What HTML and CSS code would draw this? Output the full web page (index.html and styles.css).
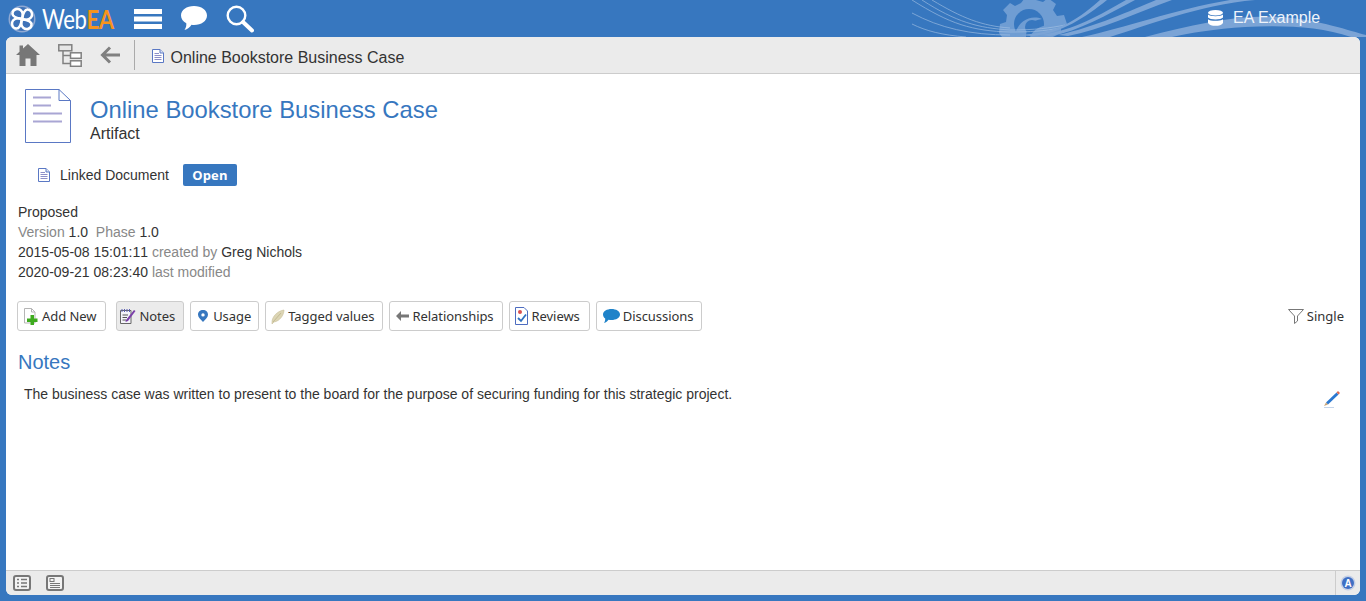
FILE: index.html
```html
<!DOCTYPE html>
<html lang="en">
<head>
<meta charset="utf-8">
<title>Online Bookstore Business Case</title>
<link rel="stylesheet" href="styles.css">
</head>
<body>
<svg width="0" height="0" class="defs">
  <defs>
    <symbol id="doc" viewBox="0 0 12 14">
      <path d="M.5.500H8L11.500 4V13.500H.5Z" fill="#fff" stroke="#5a78c4"/>
      <path d="M8 .500V4H11.500" fill="#dfe4f5" stroke="#5a78c4"/>
      <path d="M2.500 4.500H7M2.500 6.500H9.500M2.500 8.500H9.500M2.500 10.500H9.500" stroke="#8d8fc8"/>
    </symbol>
  </defs>
</svg>
<header class="topbar">
  <svg class="waves" viewBox="0 0 456 37" width="456" height="37" aria-hidden="true">
    <path d="M118 -6l6 0 2 6 7 2 5-4 8 6-3 6 4 6 7-1 3 9-6 3 0 6-8 4H92l-3-4 1-9 6-2 1-7-4-5 7-7 5 3 6-3Z" fill="#6f9dd3"/>
    <circle cx="119" cy="24" r="15" fill="#3777bf"/>
    <path d="M105 37C106 22 120 14 132 19 122 20 116 27 116 37Z" fill="#6f9dd3"/>
    <circle cx="122" cy="27" r="7" fill="#3777bf"/>
    <path d="M120 37C124 28 134 24 142 26L132 37Z" fill="#6f9dd3"/>
    <g fill="none" stroke="#a9c5e6" stroke-width=".8" opacity=".75">
      <path d="M2 0C40 24 62 31 100 32 120 32 135 31 150 28"/>
      <path d="M12 0C46 22 68 28 100 30 125 30 140 28 155 25"/>
      <path d="M22 0C52 18 72 26 100 28"/>
      <path d="M2 13C30 28 60 35 100 35"/>
      <path d="M2 24C16 31 32 35 56 37"/>
    </g>
    <g fill="#7ba4d6">
      <path d="M108 35C150 34 172 16 190 0H197C176 17 150 34 122 36Z"/>
      <path d="M130 35C165 30 190 15 216 0H225C196 15 170 31 140 36Z"/>
      <path d="M148 35C185 27 222 10 246 0H262C226 13 190 30 158 36Z"/>
      <path d="M172 37C215 28 262 10 320 0H345C290 5 235 26 200 37Z"/>
      <path d="M235 37C285 24 330 14 372 17 410 20 440 31 456 35V37H441C410 26 370 25 335 27 305 29 280 33 262 37Z"/>
    </g>
  </svg>
  <div class="brand">
    <svg class="brand-mark" viewBox="0 0 28 28" width="28" height="28" aria-hidden="true">
      <circle cx="14" cy="14" r="13.500" fill="#8fa9d3"/>
      <circle cx="14" cy="14" r="12" fill="#3f73b8"/>
      <g fill="none" stroke="#fff" stroke-width="2.500" stroke-linecap="round">
        <path d="M14 14C8 13 4 11 4.500 8 5 4 10 3 12.500 5 15 7 15 11 14 14 13 17 13 21 15.500 23 18 25 23 24 23.500 20 24 17 20 15 14 14Z"/>
        <path d="M14 14C15 8 17 4 20 4.500 24 5 25 10 23 12.500 21 15 17 15 14 14 11 13 7 13 5 15.500 3 18 4 23 8 23.500 11 24 13 20 14 14Z"/>
      </g>
    </svg>
    <span class="brand-name">Web<span class="brand-accent">EA</span></span>
  </div>
  <nav class="top-icons">
    <svg width="28" height="20" viewBox="0 0 28 20" aria-hidden="true"><path d="M0 0H28V5H0ZM0 7.500H28V12.500H0ZM0 15H28V20H0Z" fill="#fff"/></svg>
    <svg width="26" height="25" viewBox="0 0 26 25" aria-hidden="true"><path d="M13 0C20.500 0 26 4 26 9.500S20.500 19 13 19C12 19 11.500 19 10.500 18.800 9 21 6.500 23.500 3.500 24 5 22 5.500 19.500 5.300 17.300 2 15.600 0 12.800 0 9.500 0 4 5.500 0 13 0Z" fill="#fff"/></svg>
    <svg width="28" height="28" viewBox="0 0 28 28" aria-hidden="true"><circle cx="10.500" cy="10.500" r="8.800" fill="none" stroke="#fff" stroke-width="2.400"/><path d="M17 17L26 25.500" stroke="#fff" stroke-width="4" stroke-linecap="round"/></svg>
  </nav>
  <div class="repo">
    <svg width="15" height="16" viewBox="0 0 15 16" aria-hidden="true"><g fill="#fff"><ellipse cx="7.500" cy="2.800" rx="7.500" ry="2.800"/><path d="M0 4.500C2 6.700 13 6.700 15 4.500V7.500C13 10 2 10 0 7.500ZM0 9.200C2 11.400 13 11.400 15 9.200V13C13 16.800 2 16.800 0 13Z"/></g></svg>
    <span>EA Example</span>
  </div>
</header>

<main class="panel">
  <div class="toolbar">
    <svg class="tool-home" width="24" height="22" viewBox="0 0 24 22" aria-hidden="true"><path d="M12 0L24 11H20.500V22H14.500V14.500H9.500V22H3.500V11H0L3.500 7.800V1.500H7V4.600Z" fill="#777"/></svg>
    <svg class="tool-tree" width="24" height="23" viewBox="0 0 24 23" aria-hidden="true"><g fill="none" stroke="#808080" stroke-width="1.500"><rect x=".8" y=".8" width="13" height="6" fill="#e6e6e6"/><rect x="12.500" y="8.800" width="10.700" height="5.500" fill="#fff"/><rect x="12.500" y="16.800" width="10.700" height="5.500" fill="#fff"/><path d="M5 7V19.500H12.500M5 11.500H12.500"/></g></svg>
    <svg class="tool-back" width="20" height="18" viewBox="0 0 20 18" aria-hidden="true"><path d="M20 9H3M10 1.500L2.500 9 10 16.500" fill="none" stroke="#808080" stroke-width="3"/></svg>
    <span class="tool-sep"></span>
    <svg class="crumb-icon" width="12" height="14" aria-hidden="true"><use href="#doc"/></svg>
    <span class="crumb">Online Bookstore Business Case</span>
  </div>

  <div class="content">
    <div class="title-row">
      <svg class="artifact-icon" width="46" height="54" viewBox="0 0 46 54" aria-hidden="true">
        <path d="M.5.500H34L45.500 11.500V53.500H.5Z" fill="#fff" stroke="#5a78c4"/>
        <path d="M34 .500V11.500H45.500" fill="none" stroke="#5a78c4"/>
        <path d="M8 8.500H26M8 16.500H26M8 24.500H37M8 32.500H37" stroke="#a9a6d4" stroke-width="2" fill="none"/>
      </svg>
      <div class="title-text">
        <h1 class="title">Online Bookstore Business Case</h1>
        <div class="subtitle">Artifact</div>
      </div>
    </div>

    <div class="linked">
      <svg width="12" height="14" aria-hidden="true"><use href="#doc"/></svg>
      <span class="linked-label">Linked Document</span>
      <button class="open-btn" type="button">Open</button>
    </div>

    <div class="meta">
      <div>Proposed</div>
      <div><span class="muted">Version</span> 1.0 &nbsp;<span class="muted">Phase</span> 1.0</div>
      <div class="stamp">2015-05-08 15:01:11 <span class="muted">created by</span> Greg Nichols</div>
      <div>2020-09-21 08:23:40 <span class="muted">last modified</span></div>
    </div>

    <div class="tabs">
      <button class="tab tab-add" type="button">
        <svg width="15" height="17" viewBox="0 0 15 17" aria-hidden="true"><path d="M.5.500H7.500L11 4V15H.5Z" fill="#fff" stroke="#b5b5b5"/><path d="M7.500.500V4H11" fill="none" stroke="#b5b5b5"/><path d="M6.500 7H10V10.500H13.500V14H10V17H6.500V14H3V10.500H6.500Z" fill="#3eab1f"/></svg>
        Add New
      </button>
      <button class="tab tab-active" type="button">
        <svg width="16" height="16" viewBox="0 0 16 16" aria-hidden="true"><path d="M.5 2.500H11V15.500H.5Z" fill="#f4f4fa" stroke="#666"/><path d="M2 1V4M4.500 1V4M7 1V4M9.500 1V4" stroke="#5b5fb0"/><path d="M2.500 7H8M2.500 9.500H7M2.500 12H6" stroke="#555"/><path d="M6 12L14 2 15.500 3 8 13 5.500 14Z" fill="#7a3ea8"/></svg>
        Notes
      </button>
      <button class="tab tab-usage" type="button">
        <svg width="10" height="12" viewBox="0 0 10 12" aria-hidden="true"><path fill-rule="evenodd" d="M5 0C8 0 10 2 10 4.800 10 7.500 7 10 5 12 3 10 0 7.500 0 4.800 0 2 2 0 5 0ZM5 3.200A1.700 1.700 0 1 0 5 6.600 1.700 1.700 0 1 0 5 3.200Z" fill="#3777bf"/></svg>
        Usage
      </button>
      <button class="tab tab-tagged" type="button">
        <svg width="14" height="15" viewBox="0 0 14 15" aria-hidden="true"><path d="M1 13C1 8 6 2 13 1 13 6 9 12 3 13L1 15Z" fill="#dcd5b4" stroke="#c9c09a" stroke-width=".6"/><path d="M2 13L10 4" stroke="#b7ad85" stroke-width=".7"/></svg>
        Tagged values
      </button>
      <button class="tab" type="button">
        <svg width="13" height="10" viewBox="0 0 13 10" aria-hidden="true"><path d="M5 0V3.500H13V6.500H5V10L0 5Z" fill="#777"/></svg>
        Relationships
      </button>
      <button class="tab tab-reviews" type="button">
        <svg width="13" height="18" viewBox="0 0 13 18" aria-hidden="true"><path d="M.5.500H9L12.500 4V17.500H.5Z" fill="#fff" stroke="#4d6cc0"/><circle cx="5" cy="5" r="2" fill="#d85050"/><path d="M3 11L6 14 11 7.500" fill="none" stroke="#3070c0" stroke-width="1.800"/></svg>
        Reviews
      </button>
      <button class="tab" type="button">
        <svg width="17" height="14" viewBox="0 0 17 14" aria-hidden="true"><path d="M8.500 0C13 0 17 2.200 17 5.500S13 11 8.500 11C7.500 11 6.500 11 5.500 10.700 4.500 12 3 13.500 1 14 2 12.500 2.200 11 2.200 9.500 .8 8.500 0 7 0 5.500 0 2.200 4 0 8.500 0Z" fill="#1f83c9"/></svg>
        Discussions
      </button>
      <div class="filter">
        <svg width="16" height="15" viewBox="0 0 16 15" aria-hidden="true"><path d="M.5.500H15.500L9.500 7V12L6.500 14.500V7Z" fill="#fff" stroke="#777"/></svg>
        Single
      </div>
    </div>

    <h2 class="section-title">Notes</h2>
    <div class="notes">
      <p>The business case was written to present to the board for the purpose of securing funding for this strategic project.</p>
      <svg class="edit-icon" width="17" height="17" viewBox="0 0 17 17" aria-hidden="true"><path d="M3 11.500L13.500 1.500 15.500 3.500 5 13.500Z" fill="#2b78d0"/><path d="M13.500 1.500L15 0 17 2 15.500 3.500Z" fill="#e06a50"/><path d="M3 11.500L5 13.500 1 15Z" fill="#c9a67a"/><path d="M1 16.500H11" stroke="#c5d5ea"/></svg>
    </div>
  </div>

  <footer class="statusbar">
    <svg width="18" height="16" viewBox="0 0 18 16" aria-hidden="true"><rect x="1" y="1" width="16" height="14" rx="2" fill="#f3f3f3" stroke="#777" stroke-width="2"/><path d="M4 4.500H6M8 4.500H14M4 8H6M8 8H14M4 11.500H6M8 11.500H14" stroke="#777" stroke-width="1.500"/></svg>
    <svg width="18" height="16" viewBox="0 0 18 16" aria-hidden="true"><rect x="1" y="1" width="16" height="14" rx="2" fill="#f3f3f3" stroke="#777" stroke-width="2"/><rect x="4" y="3.500" width="4" height="3" fill="none" stroke="#777"/><path d="M4 8.500H14M4 10.500H14M4 12.500H14" stroke="#777"/></svg>
    <div class="status-end">
      <svg width="16" height="16" viewBox="0 0 16 16" aria-hidden="true"><circle cx="8" cy="8" r="7.500" fill="#c3cfe6"/><circle cx="8" cy="8" r="6" fill="#3f6fc4"/><text x="8" y="11.500" class="status-letter">A</text></svg>
    </div>
  </footer>
</main>
</body>
</html>
```
FILE: styles.css
```css
* { box-sizing: border-box; }
html, body { height: 100%; }
body {
  margin: 0;
  background: #3777bf;
  display: flex;
  flex-direction: column;
  overflow: hidden;
  font-family: "Liberation Sans", Arial, sans-serif;
  font-size: 14px;
  color: #333;
}
.defs { position: absolute; }

.topbar {
  height: 37px;
  flex: none;
  display: flex;
  align-items: center;
  position: relative;
  color: #fff;
}
.waves { position: absolute; left: 910px; top: 0; }
.brand { display: flex; align-items: center; margin-left: 8px; position: relative; }
.brand-mark { margin-right: 6px; }
.brand-name {
  display: block;
  width: 72px;
  white-space: nowrap;
  font-family: Lato, sans-serif;
  font-size: 26px;
  line-height: 28px;
  letter-spacing: -.5px;
  transform: scaleX(.85);
  transform-origin: left center;
}
.brand-accent { color: #f7941d; font-weight: 700; }
.top-icons { display: flex; align-items: center; gap: 19px; margin-left: 20px; position: relative; }
.repo {
  display: flex;
  align-items: center;
  gap: 10px;
  position: absolute;
  left: 1208px;
  top: 9px;
  font-size: 16px;
  line-height: 18px;
  color: #eef3fa;
}

.panel {
  flex: 1;
  min-height: 0;
  margin: 0 6px 6px;
  background: #fff;
  border-radius: 6px;
  display: flex;
  flex-direction: column;
  overflow: hidden;
}
.toolbar {
  height: 37px;
  flex: none;
  background: #ebebeb;
  border-bottom: 1px solid #ccc;
  display: flex;
  align-items: center;
  padding-left: 10px;
}
.tool-tree { margin-left: 18px; }
.tool-back { margin-left: 18px; }
.tool-sep { width: 1px; height: 30px; background: #aaa; margin: 0 17px 0 14px; }
.crumb-icon { margin-top: 1px; }
.crumb { margin-top: 5px; margin-left: 6.500px; font-size: 16px; color: #333; }

.content { flex: 1; min-height: 0; padding: 15px 16px 0 12px; }
.title-row { display: flex; align-items: flex-start; padding-left: 7px; }
.title-text { margin-left: 19px; padding-top: 7px; }
.title { margin: 0; font-size: 23.800px; line-height: 27px; font-weight: 400; color: #3777bf; }
.subtitle { margin-top: 1px; font-size: 16px; line-height: 20px; color: #333; }

.linked { display: flex; align-items: center; margin: 20px 0 0 20px; }
.linked-label { margin-left: 10px; color: #333; }
.open-btn {
  margin-left: 14px;
  width: 54px;
  height: 22px;
  padding: 0;
  border: 0;
  border-radius: 2px;
  background: #3777bf;
  color: #fff;
  font-family: "Open Sans", sans-serif;
  font-size: 13px;
  font-weight: 700;
  letter-spacing: .2px;
}

.meta { margin-top: 16px; line-height: 20px; }
.stamp { font-kerning: none; }
.muted { color: #888; }

.tabs { display: flex; align-items: center; gap: 6px; margin: 19px 0 0 -1px; }
.tab {
  height: 30px;
  padding: 0 8px 0 6px;
  display: flex;
  align-items: center;
  gap: 3px;
  background: #fff;
  border: 1px solid #ccc;
  border-radius: 3px;
  color: #333;
  font-family: "Noto Sans", sans-serif;
  font-size: 13px;
  letter-spacing: -.06px;
}
.tab-add { margin-right: 4px; padding-right: 9px; }
.tab-active { background: #ebebeb; padding-left: 3px; }
.tab-usage { padding-right: 7px; }
.tab-usage svg { margin: 0 2px 0 1px; }
.tab-tagged svg { margin-left: -1px; }
.tab-reviews { padding-right: 9px; }
.tab-reviews svg { margin: 0 1px 0 -1px; }
.filter {
  margin-left: auto;
  display: flex;
  align-items: center;
  gap: 3px;
  font-family: "Noto Sans", sans-serif;
  font-size: 13px;
  color: #333;
}

.section-title { margin: 20px 0 0; font-size: 20px; line-height: 22px; font-weight: 400; color: #3777bf; }
.notes { display: flex; justify-content: space-between; align-items: flex-start; padding: 11px 4px 0 6px; }
.notes p { margin: 0; line-height: 20px; color: #333; }
.edit-icon { margin-top: 7px; }

.statusbar {
  height: 25px;
  flex: none;
  background: #ebebeb;
  border-top: 1px solid #ccc;
  display: flex;
  align-items: center;
  gap: 15px;
  padding-left: 7px;
}
.status-end {
  margin-left: auto;
  width: 25px;
  height: 100%;
  border-left: 1px solid #ccc;
  display: flex;
  align-items: center;
  justify-content: center;
}
.status-letter { font-size: 10px; font-weight: 700; fill: #fff; text-anchor: middle; }
```
